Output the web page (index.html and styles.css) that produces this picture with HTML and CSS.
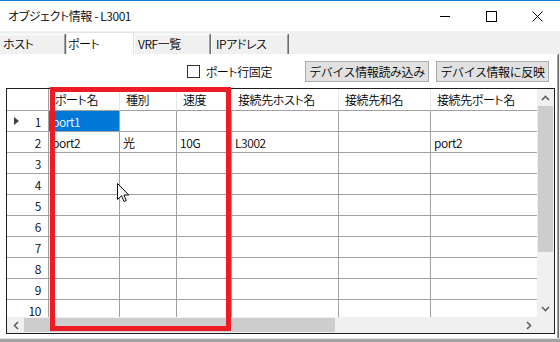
FILE: index.html
```html
<!DOCTYPE html>
<html>
<head>
  <title>オブジェクト情報 - L3001</title>
  <link rel="stylesheet" href="styles.css">
</head>
<body>
  <div class="window">
    <div class="titlebar">
      <span class="title">オブジェクト情報 - L3001</span>
      <div class="controls">
        <span class="ctl"><span class="ctl-min"></span></span>
        <span class="ctl"><span class="ctl-max"></span></span>
        <span class="ctl">
          <svg width="11" height="11" viewBox="0 0 11 11"><path d="M0.5 0.5 L10.5 10.5 M10.5 0.5 L0.5 10.5" stroke="#000" stroke-width="1"/></svg>
        </span>
      </div>
    </div>

    <div class="tabs">
      <div class="tab tab-host">ホスト</div>
      <div class="tab tab-port active">ポート</div>
      <div class="tab tab-vrf">VRF一覧</div>
      <div class="tab tab-ip">IPアドレス</div>
    </div>

    <div class="panel">
      <div class="toolbar">
        <label class="check"><span class="box"></span>ポート行固定</label>
        <button type="button" class="btn btn-load">デバイス情報読み込み</button>
        <button type="button" class="btn btn-apply">デバイス情報に反映</button>
      </div>

      <div class="grid">
        <div class="cells">
          <div class="row head">
            <div class="rh"></div>
            <div class="c">ポート名</div>
            <div class="c">種別</div>
            <div class="c">速度</div>
            <div class="c">接続先ホスト名</div>
            <div class="c">接続先和名</div>
            <div class="c">接続先ポート名</div>
          </div>
          <div class="row">
            <div class="rh"><span class="current"></span>1</div>
            <div class="c sel">port1</div>
            <div class="c"></div>
            <div class="c"></div>
            <div class="c"></div>
            <div class="c"></div>
            <div class="c"></div>
          </div>
          <div class="row">
            <div class="rh">2</div>
            <div class="c">port2</div>
            <div class="c">光</div>
            <div class="c">10G</div>
            <div class="c">L3002</div>
            <div class="c"></div>
            <div class="c">port2</div>
          </div>
          <div class="row"><div class="rh">3</div><div class="c"></div><div class="c"></div><div class="c"></div><div class="c"></div><div class="c"></div><div class="c"></div></div>
          <div class="row"><div class="rh">4</div><div class="c"></div><div class="c"></div><div class="c"></div><div class="c"></div><div class="c"></div><div class="c"></div></div>
          <div class="row"><div class="rh">5</div><div class="c"></div><div class="c"></div><div class="c"></div><div class="c"></div><div class="c"></div><div class="c"></div></div>
          <div class="row"><div class="rh">6</div><div class="c"></div><div class="c"></div><div class="c"></div><div class="c"></div><div class="c"></div><div class="c"></div></div>
          <div class="row"><div class="rh">7</div><div class="c"></div><div class="c"></div><div class="c"></div><div class="c"></div><div class="c"></div><div class="c"></div></div>
          <div class="row"><div class="rh">8</div><div class="c"></div><div class="c"></div><div class="c"></div><div class="c"></div><div class="c"></div><div class="c"></div></div>
          <div class="row"><div class="rh">9</div><div class="c"></div><div class="c"></div><div class="c"></div><div class="c"></div><div class="c"></div><div class="c"></div></div>
          <div class="row"><div class="rh">10</div><div class="c"></div><div class="c"></div><div class="c"></div><div class="c"></div><div class="c"></div><div class="c"></div></div>
        </div>

        <div class="vscroll">
          <span class="sb-btn">
            <svg width="9" height="6" viewBox="0 0 9 6"><path d="M1 5 L4.5 1.5 L8 5" fill="none" stroke="#606060" stroke-width="1.6"/></svg>
          </span>
          <span class="vthumb"></span>
          <span class="sb-fill"></span>
          <span class="sb-btn">
            <svg width="9" height="6" viewBox="0 0 9 6"><path d="M1 1 L4.5 4.5 L8 1" fill="none" stroke="#606060" stroke-width="1.6"/></svg>
          </span>
        </div>

        <div class="hscroll">
          <span class="sb-btn">
            <svg width="6" height="9" viewBox="0 0 6 9"><path d="M5 1 L1.5 4.5 L5 8" fill="none" stroke="#606060" stroke-width="1.6"/></svg>
          </span>
          <span class="hthumb"></span>
          <span class="sb-fill"></span>
          <span class="sb-btn">
            <svg width="6" height="9" viewBox="0 0 6 9"><path d="M1 1 L4.5 4.5 L1 8" fill="none" stroke="#606060" stroke-width="1.6"/></svg>
          </span>
        </div>

        <div class="corner"></div>
      </div>
    </div>

    <div class="bottom"></div>

    <div class="highlight"></div>
    <svg class="cursor" width="13" height="20" viewBox="0 0 13 20">
      <path d="M0.5 0.5 L0.5 16.5 L4.5 12.8 L7 18.5 L9.3 17.5 L6.9 12 L11.8 12 Z" fill="#fff" stroke="#000" stroke-width="1"/>
    </svg>
  </div>
</body>
</html>
```

FILE: styles.css
```css
* {
  box-sizing: border-box;
}

body {
  margin: 0;
  width: 560px;
  height: 342px;
  overflow: hidden;
  font-family: "Noto Sans CJK JP", "Noto Sans", sans-serif;
  font-feature-settings: "palt";
  font-weight: 350;
  font-size: 12px;
  letter-spacing: -0.4px;
  color: #000;
}

.window {
  position: relative;
  width: 560px;
  height: 342px;
  display: flex;
  flex-direction: column;
  background: #f0f0f0;
}

/* title bar */
.titlebar {
  height: 31px;
  background: #fff;
  border-top: 1px solid #1a7fd4;
  display: flex;
  align-items: center;
}

.title {
  padding-left: 8px;
  padding-bottom: 1px;
}

.controls {
  margin-left: auto;
  display: flex;
  height: 100%;
}

.ctl {
  width: 46px;
  display: flex;
  align-items: center;
  justify-content: center;
}

.ctl-min {
  width: 10px;
  height: 1px;
  background: #000;
}

.ctl-max {
  width: 11px;
  height: 11px;
  border: 1px solid #000;
}

/* tabs */
.tabs {
  height: 23px;
  display: flex;
  align-items: flex-end;
}

.tab {
  height: 20px;
  padding-left: 3px;
  line-height: 18px;
  background: #f0f0f0;
  border-top: 1px solid #fff;
  border-left: 1px solid #fff;
  border-right: 1px solid #a0a0a0;
  box-shadow: 1px 0 0 #6d6d6d;
}

.tab-host {
  width: 65px;
  border-left: none;
}

.tab-port {
  width: 68px;
  margin-left: 1px;
}

.tab-vrf {
  width: 76px;
  margin-left: 1px;
}

.tab-ip {
  width: 77px;
  margin-left: 1px;
  padding-left: 4px;
}

.tab.active {
  height: 22px;
  line-height: 22px;
  padding-left: 1px;
  background: #fff;
  border-top: 1px solid #e3e3e3;
  border-left: 1px solid #e3e3e3;
  border-right: 1px solid #e3e3e3;
  box-shadow: none;
  margin-right: -1px;
}

/* page */
.panel {
  height: 284px;
  background: #fff;
  border-top: 1px solid #fff;
  border-right: 1px solid #a0a0a0;
  box-shadow: 1px 0 0 #6d6d6d;
  margin-right: 2px;
}

.toolbar {
  height: 33px;
  display: flex;
  align-items: center;
  justify-content: flex-end;
  padding-right: 8px;
  padding-bottom: 1px;
}

.check {
  display: flex;
  align-items: center;
  margin-right: 33px;
}

.box {
  width: 13px;
  height: 13px;
  border: 1px solid #333;
  background: #fff;
  margin-right: 6px;
}

.btn {
  height: 21px;
  padding: 0;
  font-family: inherit;
  font-weight: inherit;
  letter-spacing: inherit;
  font-size: 12px;
  background: #e1e1e1;
  border: 1px solid #adadad;
  color: #000;
}

.btn-load {
  width: 124px;
  margin-right: 7px;
}

.btn-apply {
  width: 113px;
}

/* data grid */
.grid {
  margin-left: 6px;
  width: 549px;
  height: 246px;
  border: 1px solid #1e1e1e;
  display: grid;
  grid-template-columns: 530px 17px;
  grid-template-rows: 228px 16px;
  background: #fff;
}

.cells {
  overflow: hidden;
}

.row {
  display: grid;
  grid-template-columns: 42px 71px 57px 55px 107px 92px 107px;
  height: 21px;
}

.row > div {
  display: flex;
  align-items: center;
  white-space: nowrap;
  overflow: hidden;
  border-bottom: 1px solid #a0a0a0;
  border-right: 1px solid #a0a0a0;
}

.c {
  padding-left: 3px;
}

.rh {
  justify-content: flex-end;
  padding-right: 7px;
  position: relative;
}

.current {
  position: absolute;
  left: 7px;
  top: 6px;
  border-left: 5px solid #404040;
  border-top: 4px solid transparent;
  border-bottom: 4px solid transparent;
}

.row.head {
  height: 22px;
}

.row.head .c {
  padding-left: 6px;
  border-right-color: #e6e6e6;
}

.sel {
  background: #0078d7;
  color: #fff;
}

/* scroll bars */
.vscroll,
.hscroll {
  background: #f0f0f0;
  display: flex;
}

.vscroll {
  flex-direction: column;
}

.sb-btn {
  flex: 0 0 17px;
  display: flex;
  align-items: center;
  justify-content: center;
}

.sb-fill {
  flex: 1;
}

.vthumb {
  height: 146px;
  margin: 0 1px;
  background: #cdcdcd;
}

.hthumb {
  width: 311px;
  margin: 1px 0;
  background: #cdcdcd;
}

.corner {
  background: #f0f0f0;
}

.bottom {
  flex: 1;
  background: #a3a3a3;
  border-top: 1px solid #e3e3e3;
}

/* overlays */
.highlight {
  position: absolute;
  left: 50px;
  top: 87px;
  width: 181px;
  height: 244px;
  border: 5px solid #ed1c24;
}

.cursor {
  position: absolute;
  left: 117px;
  top: 183px;
}
```
